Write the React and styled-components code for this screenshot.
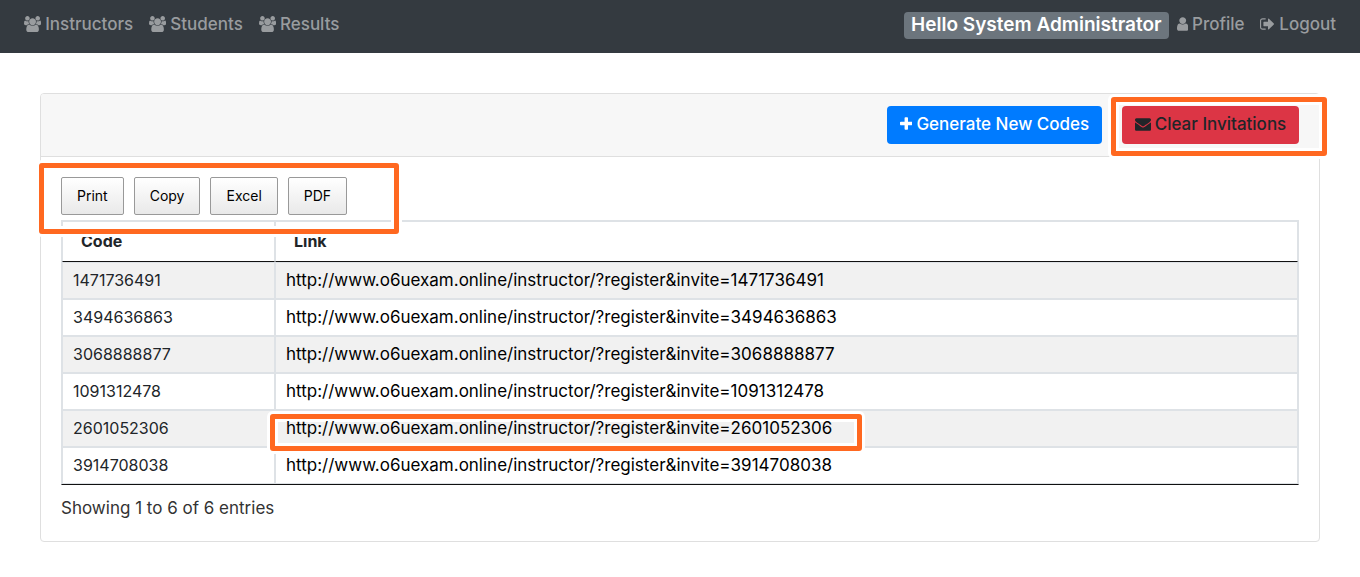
import React from 'react';
import styled, { createGlobalStyle, css } from 'styled-components';

const GlobalStyle = createGlobalStyle`
  *, *::before, *::after { box-sizing: border-box; }
  body {
    margin: 0;
    background: #fff;
    color: #212529;
    font-family: Inter, "Liberation Sans", sans-serif;
    font-size: 17px;
    line-height: 24px;
  }
`;

const glyphs = {
  users: {
    width: 1920,
    d: 'M593 896q-162 5-265 128H194q-82 0-138-40.500T0 865q0-353 124-353 6 0 43.500 21t97.500 42.500T384 597q67 0 133-23-5 37-5 66 0 139 81 256zm1071 637q0 120-73 189.500t-194 69.500H523q-121 0-194-69.500T256 1533q0-53 3.500-103.500t14-109T300 1212t43-97.500 62-81 85.500-53.500T602 960q10 0 43 21.500t73 48 107 48 135 21.500 135-21.500 107-48 73-48 43-21.500q61 0 111.500 20t85.500 53.500 62 81 43 97.500 26.500 108.500 14 109 3.500 103.500zM640 256q0 106-75 181t-181 75-181-75-75-181 75-181T384 0t181 75 75 181zm704 384q0 159-112.500 271.500T960 1024 688.500 911.500 576 640t112.500-271.500T960 256t271.500 112.500T1344 640zm576 225q0 78-56 118.500t-138 40.500h-134q-103-123-265-128 81-117 81-256 0-29-5-66 66 23 133 23 59 0 119-21.500t97.500-42.500 43.500-21q124 0 124 353zm-128-609q0 106-75 181t-181 75-181-75-75-181 75-181 181-75 181 75 75 181z',
  },
  user: {
    width: 1280,
    d: 'M1280 1399q0 109-62.500 187t-150.500 78H213q-88 0-150.500-78T0 1399q0-85 8.500-160.500t31.500-152 58.500-131 94-89T327 832q131 128 313 128t313-128q76 0 134.500 34.500t94 89 58.500 131 31.500 152 8.500 160.500zm-256-887q0 159-112.500 271.500T640 896 368.500 783.500 256 512t112.500-271.500T640 128t271.500 112.500T1024 512z',
  },
  signOut: {
    width: 1664,
    d: 'M640 1440q0 4 1 20t.5 26.500-3 23.500-10 19.500-20.500 6.500H288q-119 0-203.500-84.500T0 1248V544q0-119 84.500-203.500T288 256h320q13 0 22.500 9.500T640 288q0 4 1 20t.5 26.500-3 23.500-10 19.500T608 384H288q-66 0-113 47t-47 113v704q0 66 47 113t113 47h312l11.500 1 11.500 3 8 5.500 7 9 2 13.500zm928-544q0 26-19 45l-544 544q-19 19-45 19t-45-19-19-45v-288H448q-26 0-45-19t-19-45V704q0-26 19-45t45-19h448V352q0-26 19-45t45-19 45 19l544 544q19 19 19 45z',
  },
  envelope: {
    width: 1792,
    d: 'M1792 710v794q0 66-47 113t-113 47H160q-66 0-113-47T0 1504V710q44 49 101 87 362 246 497 345 57 42 92.500 65.500t94.500 48 110 24.500h2q51 0 110-24.500t94.500-48T1194 1142q170-123 498-345 57-39 100-87zm0-294q0 79-49 151t-122 123q-376 261-468 325-10 7-42.500 30.500t-54 38-52 32.500-57.500 27-50 9h-2q-23 0-50-9t-57.500-27-52-32.500-54-38T639 1015q-91-64-262-182.500T172 690q-62-42-117-115.500T0 438q0-78 41.500-130T160 256h1472q65 0 112.500 47t47.500 113z',
  },
  plus: {
    width: 1408,
    d: 'M1408 736v192q0 40-28 68t-68 28H896v416q0 40-28 68t-68 28H608q-40 0-68-28t-28-68v-416H96q-40 0-68-28t-28-68V736q0-40 28-68t68-28h416V224q0-40 28-68t68-28h192q40 0 68 28t28 68v416h416q40 0 68 28t28 68z',
  },
};

const Glyph = styled.svg`
  height: 16px;
  flex: none;
  fill: currentColor;
`;

const Icon = ({ name }) => (
  <Glyph viewBox={`0 0 ${glyphs[name].width} 1792`} aria-hidden="true">
    <path d={glyphs[name].d} />
  </Glyph>
);

const Navbar = styled.nav`
  display: flex;
  align-items: flex-start;
  justify-content: space-between;
  padding: 12px 24px 14px;
  background: #343a40;
`;

const NavGroup = styled.div`
  display: flex;
  align-items: flex-start;
  gap: ${(p) => p.$gap}px;
`;

const NavLink = styled.a`
  display: flex;
  align-items: center;
  gap: 4px;
  color: #999c9f;
  font-weight: 500;
  text-decoration: none;
`;

const Badge = styled.span`
  padding: 1px 7px 2px;
  border-radius: 4px;
  background: #6c757d;
  color: #fff;
  font-size: 19px;
  font-weight: 600;
`;

const Main = styled.main`
  padding: 40px;
`;

const Card = styled.section`
  border: 1px solid #dfdfdf;
  border-radius: 4px;
  background: #fff;
`;

const CardHeader = styled.header`
  display: flex;
  justify-content: flex-end;
  gap: 20px;
  padding: 12px 20px;
  border-bottom: 1px solid #dfdfdf;
  border-radius: 3px 3px 0 0;
  background: #f7f7f7;
`;

const CardBody = styled.div`
  padding: 20px;
`;

const Marked = styled.div`
  position: relative;
`;

const MarkedLink = styled(Marked)`
  width: fit-content;
`;

const Highlight = styled.span`
  position: absolute;
  z-index: 1;
  inset: ${(p) => p.$inset};
  border: 5px solid #ff6820;
  border-radius: 3px;
  box-shadow: 0 0 0 3px #fff, inset 0 0 0 3px #fff;
  pointer-events: none;
`;

const ActionButton = styled.button`
  display: flex;
  align-items: center;
  justify-content: center;
  gap: 4px;
  width: ${(p) => p.$width}px;
  height: 38px;
  padding: 0 0 2px;
  border: 0;
  border-radius: 4px;
  font: inherit;
  font-weight: 500;
  white-space: nowrap;
  ${(p) =>
    p.$danger
      ? css`
          background: #dc3545;
          color: #212529;
        `
      : css`
          background: #007bff;
          color: #fff;
        `}
`;

const ExportBar = styled(Marked)`
  display: flex;
  gap: 10px;
  width: fit-content;
  margin-bottom: 5px;
`;

const ExportButton = styled.button`
  height: 38px;
  padding: 0 15px;
  border: 1px solid #999;
  border-radius: 2px;
  background: linear-gradient(#fff, #e9e9e9);
  color: #000;
  font: inherit;
  font-size: 14px;
`;

const Table = styled.table`
  width: 100%;
  border: 1px solid #dee2e6;
  border-bottom-color: #111;
  border-collapse: separate;
  border-spacing: 0;
  font-size: 16px;
`;

const HeadCell = styled.th`
  width: ${(p) => (p.$narrow ? '213px' : 'auto')};
  padding: 7px 18px 8px;
  border: 1px solid #dee2e6;
  border-bottom-color: #111;
  font-weight: 700;
  text-align: left;
`;

const Row = styled.tr`
  &:nth-child(odd) {
    background: #f1f1f1;
  }
`;

const Cell = styled.td`
  padding: 5px 10px 6px;
  border: 1px solid #dee2e6;
`;

const InviteLink = styled.a`
  position: relative;
  z-index: 2;
  color: #000;
  font-size: 17px;
  text-decoration: none;
`;

const Summary = styled.p`
  margin: 11px 0 1px;
  color: #333;
`;

const codes = ['1471736491', '3494636863', '3068888877', '1091312478', '2601052306', '3914708038'];
const markedCode = '2601052306';

export default function App() {
  return (
    <>
      <GlobalStyle />
      <Navbar>
        <NavGroup $gap={16}>
          {['Instructors', 'Students', 'Results'].map((label) => (
            <NavLink href="#" key={label}>
              <Icon name="users" />
              {label}
            </NavLink>
          ))}
        </NavGroup>
        <NavGroup $gap={8}>
          <Badge>Hello System Administrator</Badge>
          <NavGroup $gap={16}>
            <NavLink href="#"><Icon name="user" />Profile</NavLink>
            <NavLink href="#"><Icon name="signOut" />Logout</NavLink>
          </NavGroup>
        </NavGroup>
      </Navbar>
      <Main>
        <Card>
          <CardHeader>
            <ActionButton type="button" $width={215}>
              <Icon name="plus" />Generate New Codes
            </ActionButton>
            <Marked>
              <ActionButton type="button" $danger $width={177}>
                <Icon name="envelope" />Clear Invitations
              </ActionButton>
              <Highlight $inset="-9px -28px -12px -11px" />
            </Marked>
          </CardHeader>
          <CardBody>
            <ExportBar>
              {['Print', 'Copy', 'Excel', 'PDF'].map((label) => (
                <ExportButton type="button" key={label}>{label}</ExportButton>
              ))}
              <Highlight $inset="-14px -52px -19px -22px" />
            </ExportBar>
            <Table>
              <thead>
                <tr>
                  <HeadCell $narrow>Code</HeadCell>
                  <HeadCell>Link</HeadCell>
                </tr>
              </thead>
              <tbody>
                {codes.map((code) => {
                  const url = `http://www.o6uexam.online/instructor/?register&invite=${code}`;
                  const link = <InviteLink href={url}>{url}</InviteLink>;
                  return (
                    <Row key={code}>
                      <Cell>{code}</Cell>
                      <Cell>
                        {code === markedCode ? (
                          <MarkedLink>
                            {link}
                            <Highlight $inset="-2px -30px -11px -16px" />
                          </MarkedLink>
                        ) : link}
                      </Cell>
                    </Row>
                  );
                })}
              </tbody>
            </Table>
            <Summary>Showing 1 to 6 of 6 entries</Summary>
          </CardBody>
        </Card>
      </Main>
    </>
  );
}
